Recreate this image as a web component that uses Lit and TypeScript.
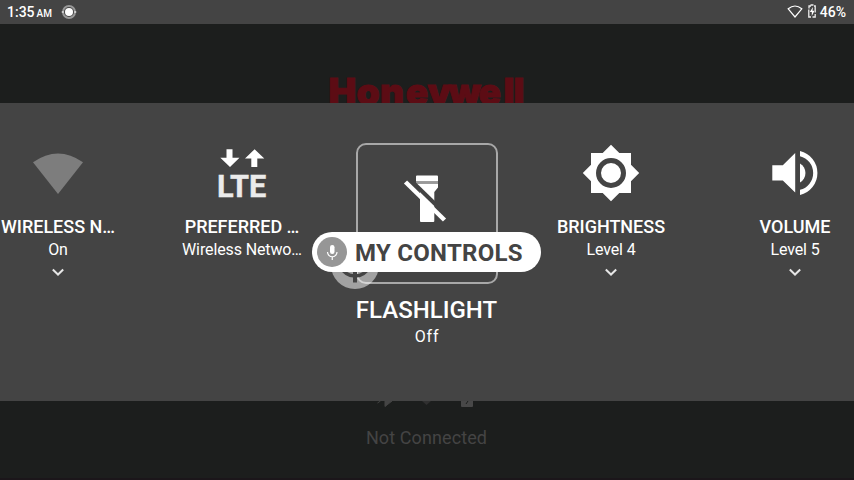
import { LitElement, html, css, svg } from "lit";
import { customElement, property } from "lit/decorators.js";

const icons: Record<string, unknown> = {
  wifi: svg`<path d="M33 32.300Q58 14.800 83 32.300L58 64Z" transform="translate(-30 -13)" fill="#7d7d7d"/>`,
  lte: svg`
    <path d="M14.500 6.300h6v8.500h7L18 24l-9.700-9.200h6.200zM39.300 24h6v-8.500h7L42.600 6.300 33 15.500h6.300z" transform="translate(-2 0)" fill="#fff"/>
    <text x="2.900" y="53.500" class="lte" textLength="49.500" lengthAdjust="spacingAndGlyphs">LTE</text>`,
  brightness: svg`
    <path d="M28 1.800l8.300 8.200H48v11.700L56.200 30 48 38.300V50H36.300L28 58.200 19.700 50H8V38.300L-.2 30 8 21.700V10h11.700z" fill="#fff"/>
    <circle cx="28" cy="30" r="12.500" fill="#fff" stroke="#444" stroke-width="5"/>`,
  volume: svg`
    <path d="M5.300 22.300h10.500L28.200 10v39.500L15.800 37.500H5.300z" fill="#fff"/>
    <path d="M33 20.500a11 11 0 0 1 0 19z" fill="#fff"/>
    <path d="M33 8a22.600 22.600 0 0 1 0 44v-5.200a17.300 17.300 0 0 0 0-33.600z" fill="#fff"/>`,
};

@customElement("control-tile")
export class ControlTile extends LitElement {
  @property() icon = "";
  @property() label = "";
  @property() value = "";
  @property({ type: Boolean }) expandable = false;

  static styles = css`
    :host { display: flex; flex-direction: column; align-items: center; padding-top: 40px; white-space: nowrap; color: #fff; }
    .icon { width: 56px; height: 60px; overflow: visible; }
    .lte { font: 700 31px Roboto, sans-serif; fill: #ebebeb; stroke: #ebebeb; stroke-width: .4px; }
    .label { font-size: 18px; font-weight: 500; line-height: 24px; margin-top: 12px; letter-spacing: -.02px; }
    .value { font-size: 16px; line-height: 22px; letter-spacing: -.12px; }
    .chevron { width: 14px; height: 10px; margin-top: 6px; }
  `;

  render() {
    return html`
      <svg class="icon" viewBox="0 0 56 60">${icons[this.icon]}</svg>
      <div class="label">${this.label}</div>
      <div class="value">${this.value}</div>
      ${this.expandable
        ? html`<svg class="chevron" viewBox="0 0 14 10"><path d="M1.800 2.500 7 7.500l5.200-5" fill="none" stroke="#e6e6e6" stroke-width="2"/></svg>`
        : ""}
    `;
  }
}

@customElement("app-root")
export class AppRoot extends LitElement {
  static styles = css`
    :host { display: flex; flex-direction: column; width: 854px; height: 480px; box-sizing: border-box; overflow: hidden; background: #1c1e1d; border-bottom: 2px solid #1b161a; font-family: Roboto, sans-serif; }
    .status { height: 24px; flex: none; display: flex; align-items: center; box-sizing: border-box; padding: 0 8px 0 7px; background: #444; color: #fff; font-size: 14px; font-weight: 500; }
    .ampm { font-size: 10px; margin: 3px 0 0 2px; }
    .assist { width: 16px; height: 16px; margin-left: 9px; }
    .system { margin-left: auto; display: flex; align-items: center; }
    .net { width: 16px; height: 14px; margin-right: 4px; }
    .battery { width: 10px; height: 16px; margin: -2px 3px 0 0; }
    .brand { height: 79px; flex: none; overflow: hidden; display: flex; justify-content: center; }
    .logo { width: 854px; height: 90px; flex: none; }
    .logo text { font: 900 37px Inter, sans-serif; fill: #5c0c14; stroke: #5c0c14; stroke-width: 1px; }
    .panel { height: 298px; flex: none; background: #444; display: grid; grid-template-columns: 184px 184px 186px 182px 186px; justify-content: center; overflow: hidden; }
    .focus { position: relative; display: flex; flex-direction: column; align-items: center; padding-top: 40px; color: #fff; }
    .frame { width: 142px; height: 141px; box-sizing: border-box; border: 2px solid #a8a8a8; border-radius: 10px; }
    .torch { display: block; width: 138px; height: 137px; }
    .title { font-size: 24px; font-weight: 500; line-height: 30px; margin-top: 11px; white-space: nowrap; padding-right: 1px; }
    .state { font-size: 16px; line-height: 22px; letter-spacing: .8px; margin-top: 1px; }
    .badge { position: absolute; left: -3px; top: 138px; width: 48px; height: 48px; }
    .hint { position: absolute; left: -22px; top: 129px; width: 229px; height: 40px; border-radius: 20px; background: #fff; display: flex; align-items: center; box-sizing: border-box; padding: 1px 0 0 5px; color: #444; font-size: 24px; font-weight: 700; letter-spacing: .27px; white-space: nowrap; }
    .mic { width: 30px; height: 30px; margin: -1px 8px 0 0; flex: none; }
    .footer { flex: 1; display: flex; flex-direction: column; align-items: center; color: #444; }
    .peek { width: 140px; height: 25px; }
    .conn { font-size: 18px; line-height: 24px; letter-spacing: .1px; padding-right: 1px; }
  `;

  render() {
    return html`
      <div class="status">
        <span>1:35</span><span class="ampm">AM</span>
        <svg class="assist" viewBox="0 0 16 16">
          <circle cx="8" cy="8" r="6" fill="none" stroke="#999" stroke-width="2"/>
          <path d="M.8 8h2M13.200 8h2" stroke="#ccc" stroke-width="2"/>
          <circle cx="8" cy="8" r="4" fill="#fff"/>
        </svg>
        <div class="system">
          <svg class="net" viewBox="0 0 16 14"><path d="M1.200 3.800Q8-1.800 14.800 3.800L8 12z" fill="none" stroke="#fff" stroke-width="1.200"/></svg>
          <svg class="battery" viewBox="0 0 10 16">
            <path d="M3.500 2h3M4 3H2v2.500M1.800 6.500V14H4M5.500 14h2.700v-3M8.200 9.500V3H7" fill="none" stroke="#eee" stroke-width="1.300"/>
            <path d="M6 4 2.800 9h2v4L7.500 7.800h-2z" fill="#fff"/>
          </svg>
          <span>46%</span>
        </div>
      </div>
      <div class="brand">
        <svg class="logo" viewBox="0 0 854 90"><text x="328.500 356.500 380 405.800 427.500 448.500 478.500 503.500 513.500" y="80.500">Honeywell</text></svg>
      </div>
      <div class="panel">
        <control-tile icon="wifi" label="WIRELESS N…" value="On" expandable></control-tile>
        <control-tile icon="lte" label="PREFERRED …" value="Wireless Netwo…"></control-tile>
        <div class="focus">
          <div class="frame">
            <svg class="torch" viewBox="358 145 138 137">
              <path d="M416 176.500q0-1 1-1h20q1 0 1 1v5h-22zM416 183.500h22v4l-3.700 4.500v29q0 1-1 1h-12.300q-1 0-1-1v-29z" fill="#fff"/>
              <path d="M416 181.500h22v2h-22z" fill="#999"/>
              <path d="M413 182.500 448 216.500" stroke="#444" stroke-width="4"/>
              <path d="M405.500 182 444.500 220" stroke="#fff" stroke-width="4.500"/>
            </svg>
          </div>
          <div class="title">FLASHLIGHT</div>
          <div class="state">Off</div>
          <svg class="badge" viewBox="0 0 48 48">
            <circle cx="24" cy="24" r="24" fill="#fff" fill-opacity=".5"/>
            <path d="M10 25.500a15 15 0 0 0 28 0" fill="none" stroke="#444" stroke-width="3.500"/>
            <path d="M24 28v13.500" stroke="#444" stroke-width="4"/>
          </svg>
          <div class="hint">
            <svg class="mic" viewBox="0 0 30 30">
              <circle cx="15" cy="15" r="15" fill="#969696"/>
              <rect x="13" y="8" width="4.500" height="9" rx="2.200" fill="#fff"/>
              <path d="M10.500 15a4.750 4.750 0 0 0 9.500 0M15.250 20v3" fill="none" stroke="#fff" stroke-width="1.200"/>
            </svg>
            <span>MY CONTROLS</span>
          </div>
        </div>
        <control-tile icon="brightness" label="BRIGHTNESS" value="Level 4" expandable></control-tile>
        <control-tile icon="volume" label="VOLUME" value="Level 5" expandable></control-tile>
      </div>
      <div class="footer">
        <svg class="peek" viewBox="357 401 140 25">
          <path d="M377.500 403l3-2M385 401v5.500l7-5.500z" fill="#444" stroke="#444"/>
          <path d="M422 401h9l-4.500 4z" fill="#303030"/>
          <path d="M461 401h12v5q0 1-1 1h-10q-1 0-1-1z" fill="#484848"/>
          <path d="M468 401l-2 3" stroke="#1c1e1d"/>
        </svg>
        <div class="conn">Not Connected</div>
      </div>
    `;
  }
}
